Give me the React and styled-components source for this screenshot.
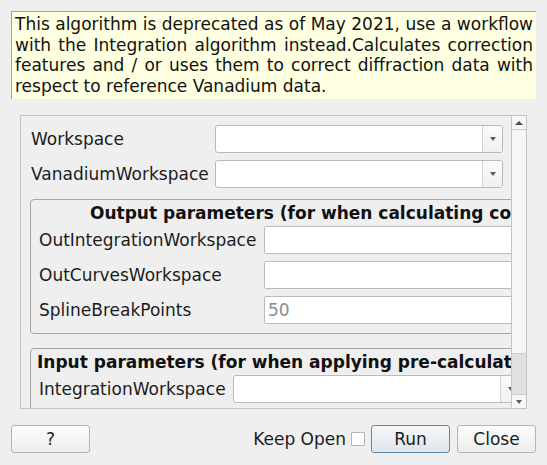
import React from "react";
import styled, { createGlobalStyle } from "styled-components";

const Global = createGlobalStyle`
  html, body {
    margin: 0;
    padding: 0;
    background: #efefef;
  }
  body {
    font-family: "DejaVu Sans", "Liberation Sans", sans-serif;
    font-size: 17px;
    color: #1c1c1c;
  }
`;

const Dialog = styled.div`
  width: 547px;
  height: 465px;
  box-sizing: border-box;
  padding: 11px 11px 12px;
  display: flex;
  flex-direction: column;
  overflow: hidden;
`;

const Notice = styled.div`
  height: 88px;
  box-sizing: border-box;
  padding: 2px 3px 0;
  background: #ffffe1;
  border-top: 1px solid #a3a3a3;
  border-left: 1px solid #a3a3a3;
  line-height: 20.7px;
  text-align: justify;
  color: #111;
`;

const ScrollArea = styled.div`
  margin: 16px 9px 0;
  height: 294px;
  box-sizing: border-box;
  border: 1px solid #c4c4c4;
  display: flex;
`;

const Viewport = styled.div`
  flex: 1;
  min-width: 0;
  overflow: hidden;
  padding: 9px 0 0 10px;
`;

const FormGrid = styled.div`
  display: grid;
  grid-template-columns: ${(p) => p.$labelWidth}px auto;
  row-gap: 7px;
  align-items: center;
  padding-left: ${(p) => p.$indent || 0}px;
`;

const Label = styled.div`
  white-space: nowrap;
  line-height: 28px;
`;

const Combo = styled.div`
  width: 288px;
  height: 28px;
  box-sizing: border-box;
  border: 1px solid #bababa;
  border-radius: 3px;
  background: #fff;
  display: flex;
`;

const ComboField = styled.div`
  flex: 1;
`;

const DropButton = styled.div`
  width: 19px;
  border-left: 1px solid #d4d4d4;
  background: linear-gradient(#fbfbfb, #f0f0f0);
  border-radius: 0 2px 2px 0;
  display: flex;
  align-items: center;
  justify-content: center;
`;

const DownArrow = styled.div`
  width: 0;
  height: 0;
  border-left: 3.5px solid transparent;
  border-right: 3.5px solid transparent;
  border-top: 4px solid #5c5c5c;
`;

const UpArrow = styled.div`
  width: 0;
  height: 0;
  border-left: 4px solid transparent;
  border-right: 4px solid transparent;
  border-bottom: 4px solid #4a4a4a;
`;

const TextInput = styled.div`
  width: 300px;
  height: 28px;
  box-sizing: border-box;
  border: 1px solid #bababa;
  border-radius: 2px;
  background: #fff;
  padding-left: 3px;
  line-height: 26px;
  color: #8c8c8c;
`;

const Group = styled.div`
  width: 620px;
  margin: ${(p) => p.$top}px 0 0 -1px;
  box-sizing: border-box;
  border: 1px solid #a6a6a6;
  border-radius: 4px;
  padding: 4px 0 9px;
`;

const GroupTitle = styled.div`
  font-weight: bold;
  line-height: 19px;
  white-space: nowrap;
  padding-left: ${(p) => p.$indent}px;
  margin-bottom: 3px;
  color: #111;
`;

const ScrollBar = styled.div`
  width: 14px;
  border-left: 1px solid #c6c6c6;
  background: #f6f6f6;
  display: flex;
  flex-direction: column;
`;

const BarButton = styled.div`
  height: 13px;
  display: flex;
  align-items: center;
  justify-content: center;
  border-${(p) => (p.$end ? "top" : "bottom")}: 1px solid #cdcdcd;
`;

const Track = styled.div`
  flex: 1;
  display: flex;
  flex-direction: column;
  justify-content: flex-end;
`;

const Handle = styled.div`
  height: 40px;
  background: #e1e1e1;
  border-top: 1px solid #cfcfcf;
`;

const ButtonRow = styled.div`
  margin-top: 16px;
  height: 28px;
  display: flex;
  align-items: center;
`;

const Spacer = styled.div`
  flex: 1;
`;

const Button = styled.div`
  width: 79px;
  height: 28px;
  box-sizing: border-box;
  border: 1px solid ${(p) => (p.$primary ? "#5f88ad" : "#b4b4b4")};
  border-radius: 3px;
  background: ${(p) =>
    p.$primary
      ? "linear-gradient(#f4f7fa, #dfe6ec)"
      : "linear-gradient(#fcfcfc, #ededed)"};
  display: flex;
  align-items: center;
  justify-content: center;
  margin-left: ${(p) => p.$gap || 0}px;
  color: #1c1c1c;
`;

const KeepOpen = styled.div`
  margin-right: 5px;
`;

const CheckBox = styled.div`
  width: 14px;
  height: 14px;
  box-sizing: border-box;
  border: 1px solid #b4b4b4;
  background: #fff;
  border-radius: 1px;
  margin-right: 6px;
`;

const ComboBox = () => (
  <Combo>
    <ComboField />
    <DropButton>
      <DownArrow />
    </DropButton>
  </Combo>
);

export default function App() {
  return (
    <>
      <Global />
      <Dialog>
        <Notice>
          This algorithm is deprecated as of May 2021, use a workflow with the
          Integration algorithm instead.Calculates correction features and / or
          uses them to correct diffraction data with respect to reference
          Vanadium data.
        </Notice>

        <ScrollArea>
          <Viewport>
            <FormGrid $labelWidth={184}>
              <Label>Workspace</Label>
              <ComboBox />
              <Label>VanadiumWorkspace</Label>
              <ComboBox />
            </FormGrid>

            <Group $top={11}>
              <GroupTitle $indent={59}>
                Output parameters (for when calculating corrections)
              </GroupTitle>
              <FormGrid $labelWidth={225} $indent={8}>
                <Label>OutIntegrationWorkspace</Label>
                <TextInput />
                <Label>OutCurvesWorkspace</Label>
                <TextInput />
                <Label>SplineBreakPoints</Label>
                <TextInput>50</TextInput>
              </FormGrid>
            </Group>

            <Group $top={14}>
              <GroupTitle $indent={6}>
                Input parameters (for when applying pre-calculated corrections)
              </GroupTitle>
              <FormGrid $labelWidth={194} $indent={8}>
                <Label>IntegrationWorkspace</Label>
                <ComboBox />
              </FormGrid>
            </Group>
          </Viewport>
          <ScrollBar>
            <BarButton>
              <UpArrow />
            </BarButton>
            <Track>
              <Handle />
            </Track>
            <BarButton $end>
              <DownArrow />
            </BarButton>
          </ScrollBar>
        </ScrollArea>

        <ButtonRow>
          <Button>?</Button>
          <Spacer />
          <KeepOpen>Keep Open</KeepOpen>
          <CheckBox />
          <Button $primary>Run</Button>
          <Button $gap={7}>Close</Button>
        </ButtonRow>
      </Dialog>
    </>
  );
}
